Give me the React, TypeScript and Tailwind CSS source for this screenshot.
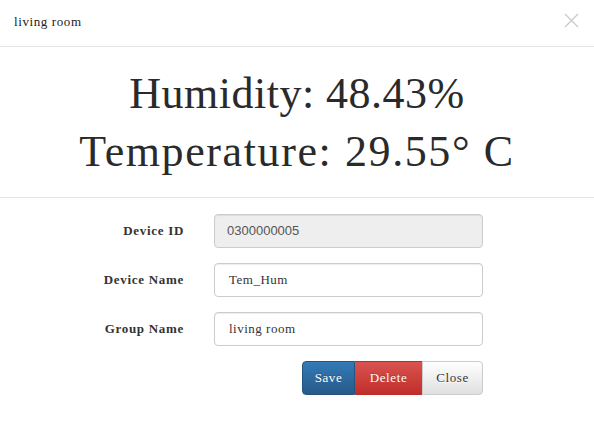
import React from 'react';

const serif = "font-['Liberation_Serif','Times_New_Roman',serif]";

const rows = [
  { label: 'Device ID', value: '0300000005', readOnly: true },
  { label: 'Device Name', value: 'Tem_Hum', readOnly: false },
  { label: 'Group Name', value: 'living room', readOnly: false },
];

export default function App() {
  return (
    <div className="w-[594px] h-[423px] bg-white text-[#333] overflow-hidden">
      {/* header */}
      <div className="h-[47px] flex items-center justify-between pl-[14px] pr-[15px] border-b border-[#e5e5e5]">
        <span className={`${serif} text-[13px] tracking-[0.6px] text-[#222] -mt-[2px]`}>living room</span>
        <svg width="15" height="15" viewBox="0 0 15 15" className="-mt-[6px]">
          <path d="M1 1 L14 14 M14 1 L1 14" stroke="#c9c9c9" strokeWidth="1.3" fill="none" />
        </svg>
      </div>

      {/* readings */}
      <div className={`${serif} py-[17px] border-b border-[#e5e5e5] text-center text-[44px] text-[#2a2a2a]`}>
        <div className="h-[58px] leading-[58px] tracking-[0.5px] pt-[1px]">Humidity: 48.43%</div>
        <div className="h-[58px] leading-[58px] tracking-[1.6px] pt-[1px]">Temperature: 29.55° C</div>
      </div>

      {/* form */}
      <div className="pt-[16px] flex flex-col gap-[15px]">
        {rows.map((r) => (
          <div key={r.label} className="flex items-center h-[34px]">
            <label className={`${serif} w-[184px] text-right font-bold text-[13px] tracking-[0.7px] text-[#333]`}>
              {r.label}
            </label>
            <div
              className={`ml-[30px] w-[269px] h-[34px] rounded-[4px] border border-[#ccc] flex items-center shadow-[inset_0_1px_1px_rgba(0,0,0,0.075)] ${
                r.readOnly
                  ? "bg-[#eee] pl-[12px] font-['Liberation_Sans',Arial,sans-serif] text-[13px] text-[#555]"
                  : `bg-white pl-[14px] ${serif} text-[13px] tracking-[0.5px] text-[#333]`
              }`}
            >
              {r.value}
            </div>
          </div>
        ))}
        <div className="flex pl-[302px]">
          <div className={`${serif} flex h-[34px] text-[13px] tracking-[0.6px]`}>
            <button className="w-[53px] rounded-l-[4px] border border-[#245580] text-white [text-shadow:0_-1px_0_rgba(0,0,0,0.2)] bg-[linear-gradient(to_bottom,#337ab7_0%,#265a88_100%)]">
              Save
            </button>
            <button className="w-[67px] border-y border-[#b92c28] text-white [text-shadow:0_-1px_0_rgba(0,0,0,0.2)] bg-[linear-gradient(to_bottom,#d9534f_0%,#c12e2a_100%)]">
              Delete
            </button>
            <button className="w-[61px] rounded-r-[4px] border border-[#ccc] text-[#333] [text-shadow:0_1px_0_#fff] bg-[linear-gradient(to_bottom,#fff_0%,#e0e0e0_100%)]">
              Close
            </button>
          </div>
        </div>
      </div>
    </div>
  );
}
